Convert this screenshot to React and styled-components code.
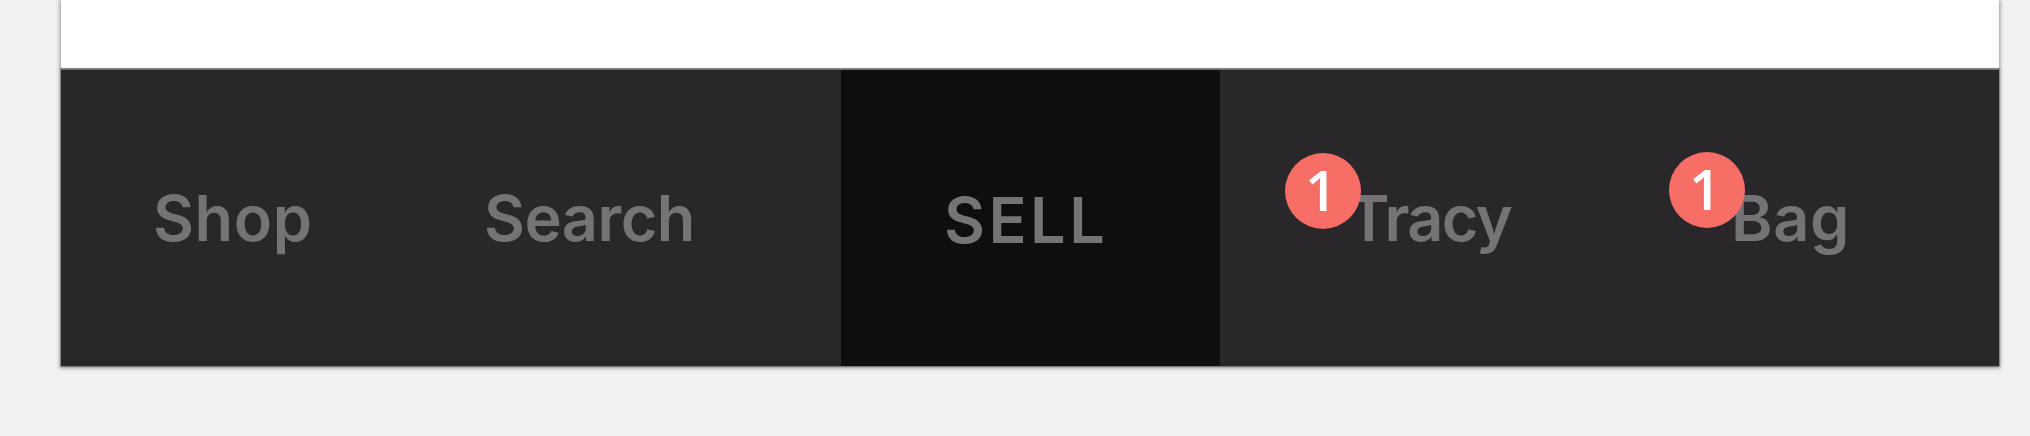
import React from "react";
import styled, { createGlobalStyle } from "styled-components";

const GlobalStyle = createGlobalStyle`
  * { box-sizing: border-box; }
  html, body { margin: 0; overflow: hidden; }
  body { background: #f1f1f1; }
`;

const Page = styled.main`
  width: 2030px;
  height: 436px;
  padding: 0 31px 0 61px;
  background: #f1f1f1;
  overflow: hidden;
`;

const Card = styled.section`
  display: flex;
  flex-direction: column;
  height: 366px;
  background: #fff;
  box-shadow: 0 1px 4px 1px rgba(0, 0, 0, 0.4);
`;

const Content = styled.div`
  height: 69px;
  border-bottom: 1px solid #b9bbbb;
`;

const NavBar = styled.nav`
  display: flex;
  height: 297px;
  background: #29272a;
  border-top: 1px solid #6f7071;
  box-shadow: 0 0 1px 1px rgba(41, 39, 42, 0.35);
`;

const Tab = styled.a`
  width: ${(p) => p.$width}px;
  height: 100%;
  padding: ${(p) => (p.$primary ? 110 : 108)}px 0 0 ${(p) => p.$inset}px;
  background: ${(p) => (p.$primary ? "#0e0e0e" : "transparent")};
  color: #757376;
  white-space: nowrap;
`;

const Label = styled.span`
  display: inline-block;
  position: relative;
  font: 600 63px/80px Inter, sans-serif;
  letter-spacing: ${(p) => p.$tracking ?? 0}px;
`;

const Badge = styled.span`
  position: absolute;
  left: ${(p) => p.$left}px;
  top: ${(p) => p.$top}px;
  width: 76px;
  height: 76px;
  padding-right: 4px;
  border-radius: 50%;
  background: #f76e67;
  color: #fff;
  font: 650 56px/73px "Open Sans", sans-serif;
  letter-spacing: 0;
  text-align: center;
`;

const tabs = [
  { label: "Shop", width: 343, inset: 92, tracking: 0.6 },
  { label: "Search", width: 437, inset: 80, tracking: -0.5 },
  { label: "SELL", width: 379, inset: 103, primary: true, tracking: 3.5 },
  { label: "Tracy", width: 393, inset: 128, tracking: -1.6, badge: { count: 1, left: -63, top: -25 } },
  { label: "Bag", width: 386, inset: 118, tracking: 0.6, badge: { count: 1, left: -62, top: -26 } },
];

export default function App() {
  return (
    <>
      <GlobalStyle />
      <Page>
        <Card>
          <Content />
          <NavBar>
            {tabs.map((t) => (
              <Tab key={t.label} $width={t.width} $inset={t.inset} $primary={t.primary}>
                <Label $tracking={t.tracking}>
                  {t.label}
                  {t.badge && (
                    <Badge $left={t.badge.left} $top={t.badge.top}>
                      {t.badge.count}
                    </Badge>
                  )}
                </Label>
              </Tab>
            ))}
          </NavBar>
        </Card>
      </Page>
    </>
  );
}
